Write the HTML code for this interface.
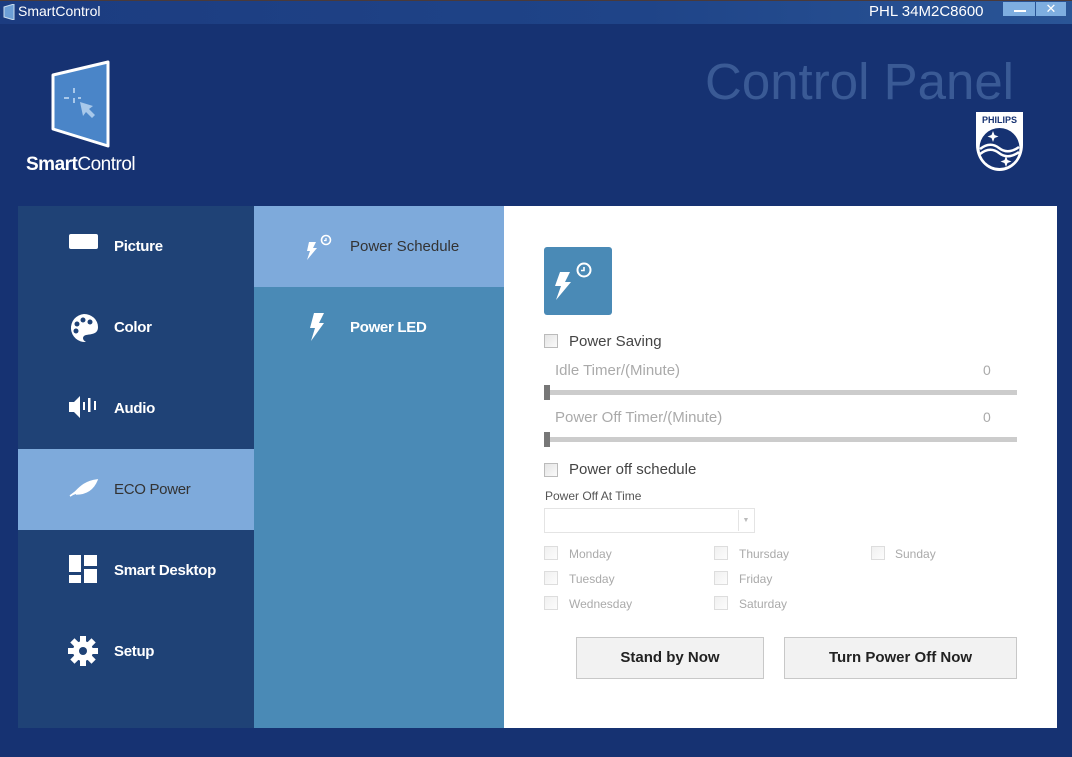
<!DOCTYPE html>
<html><head><meta charset="utf-8"><style>
*{margin:0;padding:0;box-sizing:border-box}
body{width:1072px;height:757px;background:#163272;font-family:"Liberation Sans",sans-serif;position:relative;overflow:hidden}
.abs{position:absolute}
.tb{left:0;top:0;width:1072px;height:24px;background:linear-gradient(90deg,#1c3c80,#1f4488 60%,#2a5596);border-top:1px solid #4a3a3a}
.nav{left:18px;top:206px;width:236px;height:522px;background:#1f4276}
.ni{position:absolute;left:0;width:236px;height:81px;color:#fff;font-weight:bold;font-size:15px;letter-spacing:-0.3px}
.ni span{position:absolute;left:96px;top:32px}
.ni svg{position:absolute;left:50px;top:25px}
.mid{left:254px;top:206px;width:250px;height:522px;background:#4a8ab6}
.pan{left:504px;top:206px;width:553px;height:522px;background:#fff}
.cb{position:absolute;width:14px;height:14px;border:1px solid #bbb;background:linear-gradient(135deg,#e4e4e4,#fafafa)}
.cbl{border-color:#ddd;background:linear-gradient(135deg,#f0f0f0,#fcfcfc)}
.t{position:absolute;white-space:nowrap}
.day{font-size:12px;color:#aaa}
.btn{position:absolute;top:637px;height:42px;border:1px solid #c8c8c8;background:#f2f2f2;font-size:15px;color:#222;text-align:center;line-height:40px;font-weight:bold}
</style></head><body>
<div class="abs tb"></div>
<svg class="abs" style="left:3px;top:4px" width="12" height="16"><path d="M1 3 L11 0 L11 16 L1 13Z" fill="#6d9fd6" stroke="#cde" stroke-width="1"/></svg>
<div class="t" style="left:18px;top:3px;color:#fff;font-size:14px">SmartControl</div>
<div class="t" style="left:869px;top:3px;color:#fff;font-size:15px">PHL 34M2C8600</div>
<div class="abs" style="left:1003px;top:2px;width:32px;height:14px;background:#7eaee0"><div class="abs" style="left:11px;top:8px;width:12px;height:2px;background:#fff"></div></div>
<div class="abs" style="left:1036px;top:2px;width:30px;height:14px;background:#7eaee0;color:#fff;font-size:13px;text-align:center;line-height:13px">✕</div>

<svg class="abs" style="left:50px;top:60px" width="62" height="88"><path d="M3 15 L58 2 L58 86 L3 69Z" fill="#4a85c8" stroke="#fff" stroke-width="3" stroke-linejoin="round"/><g stroke="#a8c8ea" stroke-width="2"><path d="M24 28v5M24 38v5M14 38h5M28 38h3"/></g><path d="M30 42 L43 46 L39 49 L45 55 L42 58 L36 52 L33 56Z" fill="#a8c8ea"/></svg>
<div class="t" style="left:26px;top:154px;color:#fff;font-size:19px;letter-spacing:-0.5px"><b>Smart</b>Control</div>

<div class="t" style="left:705px;top:52px;color:#3a5a95;font-size:51px;letter-spacing:0px">Control Panel</div>
<svg class="abs" style="left:975px;top:111px" width="49" height="62"><path d="M1 1 H48 V34 A23.5 26 0 0 1 1 34Z" fill="#fff"/><text x="24.5" y="12" font-family="Liberation Sans" font-weight="bold" font-size="9" fill="#163272" text-anchor="middle">PHILIPS</text><circle cx="24.5" cy="37" r="20" fill="#163272"/><path d="M5 38 Q15 30 24 37 T44 36 M5 43 Q15 35 24 42 T44 41" stroke="#fff" stroke-width="2.5" fill="none"/><path d="M18 20l1.5 4 4 1.5-4 1.5-1.5 4-1.5-4-4-1.5 4-1.5z M31 45l1.5 4 4 1.5-4 1.5-1.5 4-1.5-4-4-1.5 4-1.5z" fill="#fff"/></svg>

<div class="abs nav">
<div class="ni" style="top:0"><svg width="32" height="20"><rect x="1" y="3" width="29" height="15" rx="2" fill="#fff"/></svg><span>Picture</span></div>
<div class="ni" style="top:81px"><svg width="32" height="32"><path d="M16 2 A14 14 0 1 0 18 30 C14 28 14 24 18 23 C24 22 30 22 30 15 A14 13 0 0 0 16 2Z" fill="#fff"/><g fill="#1f4276"><circle cx="9" cy="12" r="2.5"/><circle cx="15" cy="8" r="2.5"/><circle cx="22" cy="10" r="2.5"/><circle cx="8" cy="19" r="2.5"/></g></svg><span>Color</span></div>
<div class="ni" style="top:162px"><svg width="32" height="32"><path d="M1 9h5l6-6v22l-6-6H1z" fill="#fff"/><rect x="15" y="9" width="2" height="8" fill="#fff"/><rect x="20" y="5" width="2.5" height="14" fill="#fff"/><rect x="26" y="8" width="2" height="9" fill="#fff"/></svg><span>Audio</span></div>
<div class="ni" style="top:243px;background:#7eaadb;color:#333;font-weight:normal"><svg width="32" height="32"><path d="M2 22 C8 20 12 8 29 6 C25 16 18 20 8 20 M2 22 L10 16" fill="#fff" stroke="#fff" stroke-width="1.5"/></svg><span>ECO Power</span></div>
<div class="ni" style="top:324px"><svg width="32" height="32"><rect x="1" y="0" width="12" height="17" fill="#fff"/><rect x="16" y="0" width="13" height="11" fill="#fff"/><rect x="16" y="14" width="13" height="14" fill="#fff"/><rect x="1" y="20" width="12" height="8" fill="#fff"/></svg><span>Smart Desktop</span></div>
<div class="ni" style="top:405px"><svg width="32" height="32"><g transform="translate(15 15)" fill="#fff"><circle r="10"/><g id="g"><rect x="-3" y="-15" width="6" height="30"/></g><use href="#g" transform="rotate(45)"/><use href="#g" transform="rotate(90)"/><use href="#g" transform="rotate(135)"/><circle r="4" fill="#1f4276"/></g></svg><span>Setup</span></div>
</div>

<div class="abs mid">
<div class="abs" style="left:0;top:0;width:250px;height:81px;background:#7eaadb"></div>
<svg class="abs" style="left:50px;top:28px" width="32" height="28"><path d="M5 8h7l-3 6h4l-10 12 3-9H3z" fill="#fff"/><circle cx="22" cy="6" r="4.5" fill="none" stroke="#fff" stroke-width="1.6"/><path d="M22 4v2.5h-2" stroke="#fff" stroke-width="1.3" fill="none"/></svg>
<div class="t" style="left:96px;top:32px;font-size:15px;color:#333">Power Schedule</div>
<svg class="abs" style="left:54px;top:106px" width="24" height="30"><path d="M6 1h10l-5 10h5L3 29l4-13H2z" fill="#fff"/></svg>
<div class="t" style="left:96px;top:113px;font-size:15px;color:#fff;font-weight:bold;letter-spacing:-0.3px">Power LED</div>
</div>

<div class="abs pan"></div>
<div class="abs" style="left:544px;top:247px;width:68px;height:68px;background:#4a8ab6;border-radius:3px"></div>
<svg class="abs" style="left:552px;top:260px" width="50" height="45"><path d="M8 12h10l-5 10h6L4 40l5-14H3z" fill="#fff"/><circle cx="32" cy="10" r="6.5" fill="none" stroke="#fff" stroke-width="2"/><path d="M32 7v3.5h-3" stroke="#fff" stroke-width="1.6" fill="none"/></svg>

<div class="cb" style="left:544px;top:334px"></div>
<div class="t" style="left:569px;top:333px;font-size:15px;color:#444">Power Saving</div>
<div class="t" style="left:555px;top:362px;font-size:15px;color:#aaa">Idle Timer/(Minute)</div>
<div class="t" style="left:983px;top:362px;font-size:14px;color:#aaa">0</div>
<div class="abs" style="left:544px;top:390px;width:473px;height:5px;background:#ccc"></div>
<div class="abs" style="left:544px;top:385px;width:6px;height:15px;background:#777"></div>
<div class="t" style="left:555px;top:409px;font-size:15px;color:#aaa">Power Off Timer/(Minute)</div>
<div class="t" style="left:983px;top:409px;font-size:14px;color:#aaa">0</div>
<div class="abs" style="left:544px;top:437px;width:473px;height:5px;background:#ccc"></div>
<div class="abs" style="left:544px;top:432px;width:6px;height:15px;background:#777"></div>

<div class="cb" style="left:544px;top:463px"></div>
<div class="t" style="left:569px;top:461px;font-size:15px;color:#444">Power off schedule</div>
<div class="t" style="left:545px;top:489px;font-size:12px;color:#555">Power Off At Time</div>
<div class="abs" style="left:544px;top:508px;width:211px;height:25px;border:1px solid #e4e4e4"><div class="abs" style="right:1px;top:1px;width:15px;height:21px;border-left:1px solid #e4e4e4;color:#bbb;font-size:7px;text-align:center;line-height:21px">▼</div></div>

<div class="cb cbl" style="left:544px;top:546px"></div><div class="t day" style="left:569px;top:547px">Monday</div>
<div class="cb cbl" style="left:544px;top:571px"></div><div class="t day" style="left:569px;top:572px">Tuesday</div>
<div class="cb cbl" style="left:544px;top:596px"></div><div class="t day" style="left:569px;top:597px">Wednesday</div>
<div class="cb cbl" style="left:714px;top:546px"></div><div class="t day" style="left:739px;top:547px">Thursday</div>
<div class="cb cbl" style="left:714px;top:571px"></div><div class="t day" style="left:739px;top:572px">Friday</div>
<div class="cb cbl" style="left:714px;top:596px"></div><div class="t day" style="left:739px;top:597px">Saturday</div>
<div class="cb cbl" style="left:871px;top:546px"></div><div class="t day" style="left:895px;top:547px">Sunday</div>

<div class="btn" style="left:576px;width:188px">Stand by Now</div>
<div class="btn" style="left:784px;width:233px">Turn Power Off Now</div>
</body></html>
